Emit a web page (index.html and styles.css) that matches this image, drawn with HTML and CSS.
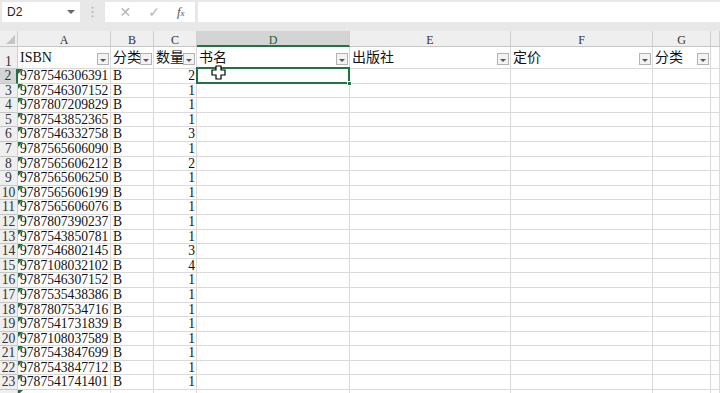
FILE: index.html
```html
<!DOCTYPE html>
<html lang="zh-CN">
<head>
    <meta charset="UTF-8">
    <title>图书清单.xlsx</title>
    <link rel="stylesheet" href="styles.css">
</head>
<body>
    <div class="toolbar">
        <div class="namebox">
            <span>D2</span>
            <span class="nb-arrow"></span>
        </div>
        <div class="dots">⋮</div>
        <div class="fxbox">
            <span class="fx-btn">✕</span>
            <span class="fx-btn">✓</span>
            <span class="fx-btn fx">f<small>x</small></span>
        </div>
        <div class="formula"></div>
    </div>

    <div class="sheet" id="sheet">
        <div class="hd corner"></div>
        <div class="hd col">A</div>
        <div class="hd col">B</div>
        <div class="hd col">C</div>
        <div class="hd col col-sel">D</div>
        <div class="hd col">E</div>
        <div class="hd col">F</div>
        <div class="hd col">G</div>
        <div class="hd col"></div>

        <div class="hd rownum row1">1</div>
        <div class="cell head"><span class="lbl">ISBN</span><span class="filter"></span></div>
        <div class="cell head"><span class="lbl">分类号</span><span class="filter"></span></div>
        <div class="cell head"><span class="lbl">数量</span><span class="filter"></span></div>
        <div class="cell head"><span class="lbl">书名</span><span class="filter"></span></div>
        <div class="cell head"><span class="lbl">出版社</span><span class="filter"></span></div>
        <div class="cell head"><span class="lbl">定价</span><span class="filter"></span></div>
        <div class="cell head"><span class="lbl">分类</span><span class="filter"></span></div>
        <div class="cell head"></div>
    </div>

    <svg class="cursor" width="15" height="15" viewBox="0 0 15 15">
        <path d="M5 1h5v4h4v5h-4v4h-5v-4h-4v-5h4z" fill="#fff" stroke="#000" stroke-width="1.2"/>
    </svg>

    <script src="script.js"></script>
</body>
</html>
```

FILE: styles.css
```css
body {
    margin: 0;
    width: 720px;
    height: 393px;
    overflow: hidden;
    background-color: #fff;
    font-family: "Liberation Serif", "Noto Sans CJK SC", serif;
    color: #111;
    position: relative;
}

.toolbar {
    display: flex;
    align-items: flex-start;
    height: 31px;
    padding: 2px 0 0 2px;
    box-sizing: border-box;
    background-color: #e8e8e8;
}

.namebox {
    width: 78px;
    height: 20px;
    background-color: #fff;
    display: flex;
    align-items: center;
    justify-content: space-between;
    padding: 0 5px 0 5px;
    box-sizing: border-box;
    font: 12px "Liberation Sans", sans-serif;
    color: #222;
}

.nb-arrow {
    width: 0;
    height: 0;
    border-left: 4px solid transparent;
    border-right: 4px solid transparent;
    border-top: 4px solid #666;
}

.dots {
    width: 25px;
    height: 20px;
    text-align: center;
    color: #a8a8a8;
    font: 13px "DejaVu Sans", sans-serif;
    line-height: 20px;
}

.fxbox {
    width: 90px;
    height: 20px;
    background-color: #fff;
    display: flex;
    align-items: center;
    justify-content: space-around;
    padding: 0 2px 0 6px;
    box-sizing: border-box;
}

.fx-btn {
    color: #b4b4b4;
    font: 14px "DejaVu Sans", sans-serif;
}

.fx {
    color: #555;
    font: italic 13px "Liberation Serif", serif;
}

.fx small {
    font-size: 9px;
}

.formula {
    flex: 1;
    height: 20px;
    margin-left: 3px;
    background-color: #fff;
}

.sheet {
    display: grid;
    grid-template-columns: 18px 93px 43px 43px 153px 161px 142px 58px 1fr;
    grid-template-rows: 16px 22px repeat(23, 14.6px);
}

.hd {
    background-color: #efefef;
    border-right: 1px solid #cfcfcf;
    border-bottom: 1px solid #c6c6c6;
    box-sizing: border-box;
    text-align: center;
    color: #333;
    overflow: hidden;
}

.corner {
    position: relative;
}

.corner::after {
    content: "";
    position: absolute;
    right: 2px;
    bottom: 2px;
    border-left: 9px solid transparent;
    border-bottom: 9px solid #c4c4c4;
}

.col {
    font-size: 12px;
    line-height: 16px;
    padding-top: 1px;
}

.col-sel {
    background-color: #d4d4d4;
    border-bottom: 2px solid #217346;
    color: #1d5e3a;
}

.rownum {
    font-size: 13.6px;
    line-height: 14.6px;
}

.row1 {
    line-height: 30px;
}

.row-sel {
    background-color: #d4d4d4;
    border-right: 2px solid #217346;
}

.cell {
    border-right: 1px solid #dadada;
    border-bottom: 1px solid #dadada;
    box-sizing: border-box;
    font-size: 13.6px;
    line-height: 14.6px;
    padding: 0 2px;
    white-space: nowrap;
    overflow: hidden;
    position: relative;
}

.head {
    display: flex;
    align-items: flex-end;
    padding: 0 1px 2px 2px;
    font-size: 14px;
    line-height: 17px;
}

.lbl {
    flex: 1;
    min-width: 0;
    overflow: hidden;
}

.filter {
    width: 12px;
    height: 12px;
    margin-bottom: 1px;
    border: 1px solid #b3b3b3;
    background-color: #f3f3f3;
    box-sizing: border-box;
    display: flex;
    align-items: center;
    justify-content: center;
}

.filter::after {
    content: "";
    margin-top: 2px;
    border-left: 3px solid transparent;
    border-right: 3px solid transparent;
    border-top: 3px solid #555;
}

.num {
    text-align: right;
    padding-right: 1px;
}

.txt::before {
    content: "";
    position: absolute;
    left: 0;
    top: 0;
    border-top: 5px solid #1e7145;
    border-right: 5px solid transparent;
}

.active {
    overflow: visible;
}

.active::after {
    content: "";
    position: absolute;
    left: -1px;
    top: -2px;
    right: -1px;
    bottom: -1px;
    border: 2px solid #217346;
    z-index: 2;
}

.active::before {
    content: "";
    position: absolute;
    right: -3px;
    bottom: -3px;
    width: 5px;
    height: 5px;
    background-color: #217346;
    border: 1px solid #fff;
    box-sizing: border-box;
    z-index: 3;
}

.cursor {
    position: absolute;
    left: 211px;
    top: 65px;
    z-index: 5;
}
```

FILE: script.js
```javascript
const books = [
    ['9787546306391', 2],
    ['9787546307152', 1],
    ['9787807209829', 1],
    ['9787543852365', 1],
    ['9787546332758', 3],
    ['9787565606090', 1],
    ['9787565606212', 2],
    ['9787565606250', 1],
    ['9787565606199', 1],
    ['9787565606076', 1],
    ['9787807390237', 1],
    ['9787543850781', 1],
    ['9787546802145', 3],
    ['9787108032102', 4],
    ['9787546307152', 1],
    ['9787535438386', 1],
    ['9787807534716', 1],
    ['9787541731839', 1],
    ['9787108037589', 1],
    ['9787543847699', 1],
    ['9787543847712', 1],
    ['9787541741401', 1]
];

const sheet = document.getElementById('sheet');

function addCell(cls, text) {
    const div = document.createElement('div');
    div.className = cls;
    div.textContent = text;
    sheet.appendChild(div);
}

books.forEach((book, i) => {
    const rowNo = i + 2;
    addCell(rowNo === 2 ? 'hd rownum row-sel' : 'hd rownum', rowNo);
    addCell('cell txt', book[0]);
    addCell('cell', 'B');
    addCell('cell num', book[1]);
    addCell(rowNo === 2 ? 'cell active' : 'cell', '');
    addCell('cell', '');
    addCell('cell', '');
    addCell('cell', '');
    addCell('cell', '');
});

// row 24 only peeks in at the bottom edge, its number is hidden
addCell('hd rownum', '');
addCell('cell txt', '');
for (let c = 0; c < 7; c++) addCell('cell', '');
```
